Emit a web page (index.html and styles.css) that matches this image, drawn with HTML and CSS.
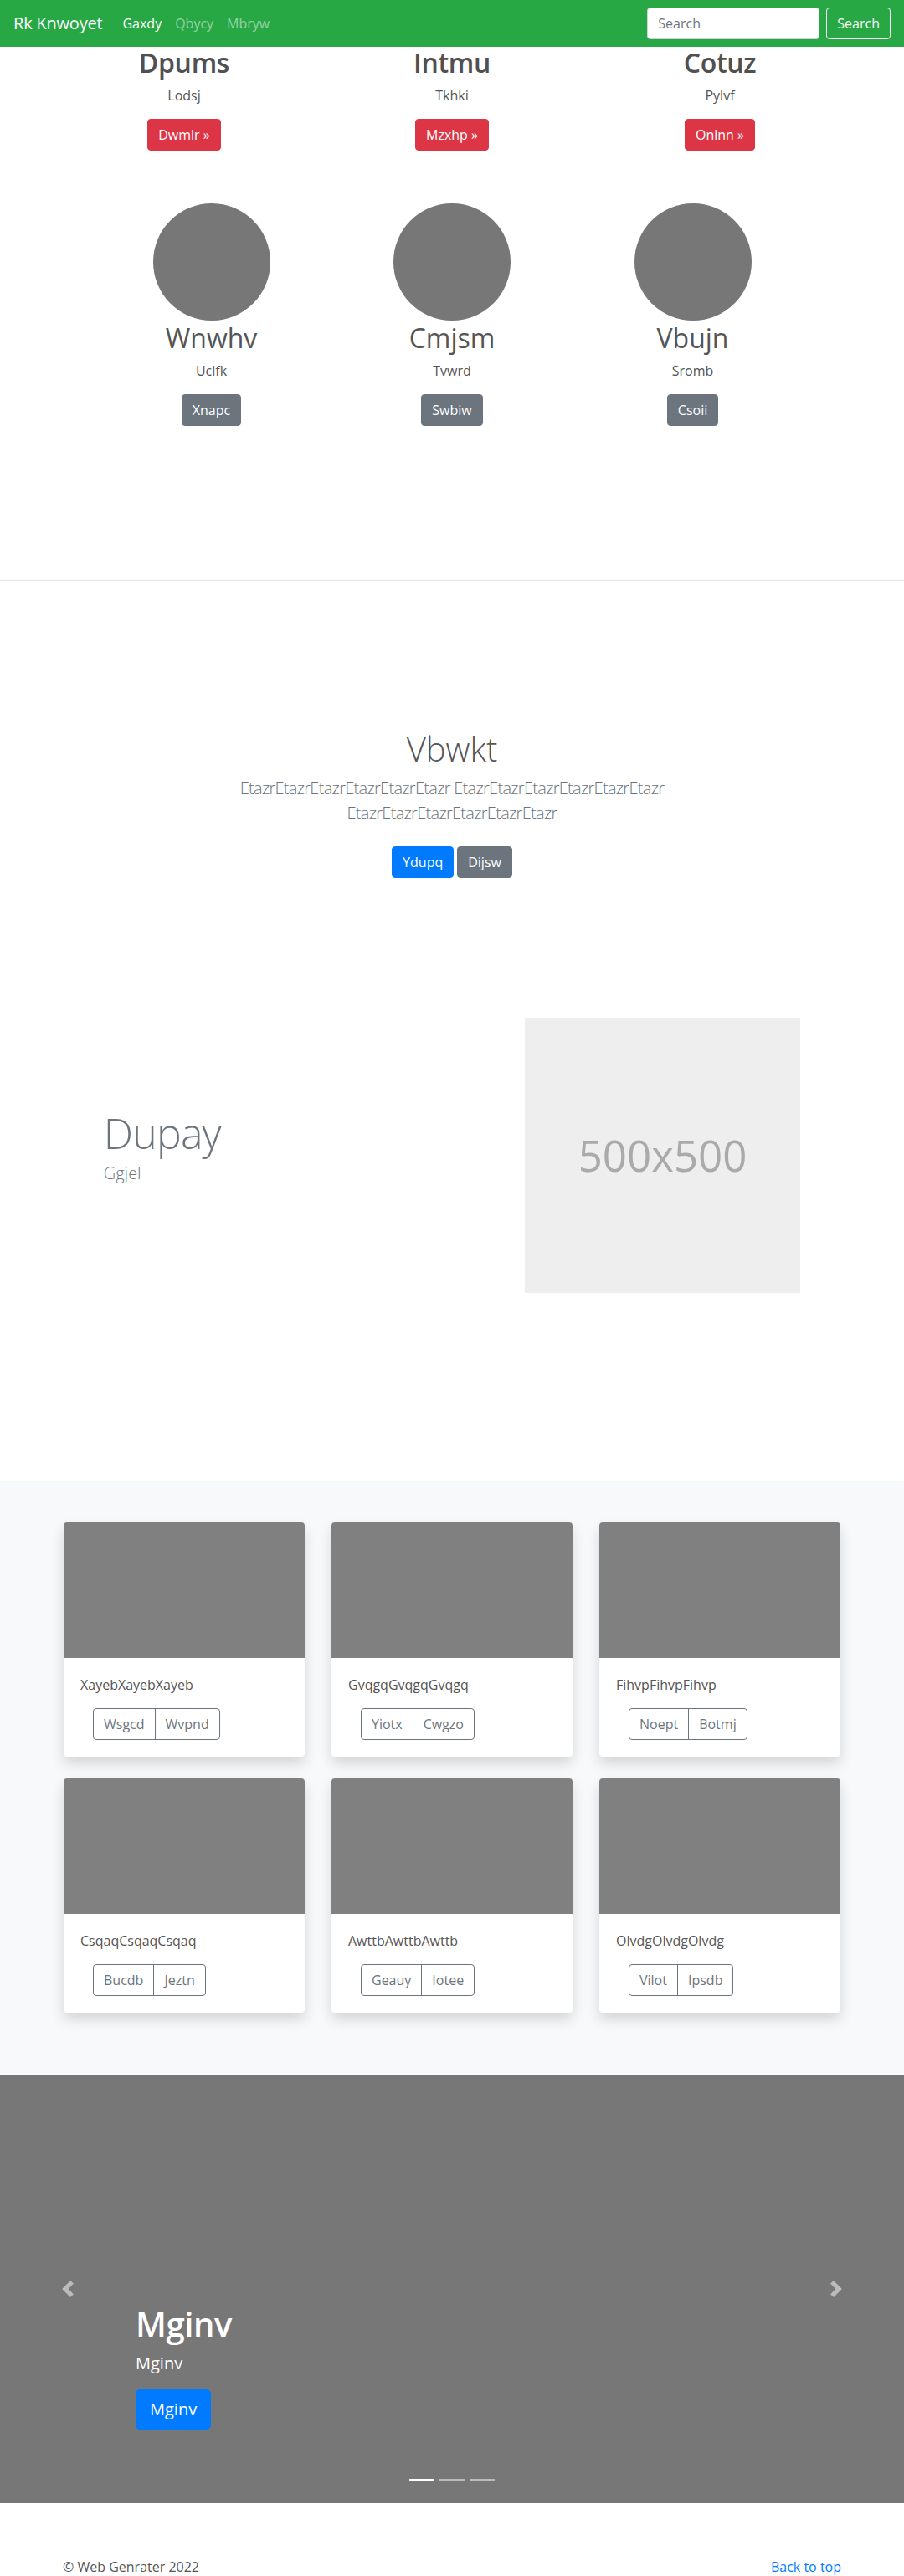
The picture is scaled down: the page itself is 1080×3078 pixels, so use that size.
FILE: index.html
```html
<!DOCTYPE html>
<html lang="en">
<head>
<meta charset="utf-8">
<title>Rk Knwoyet</title>
<link rel="stylesheet" href="styles.css">
</head>
<body>
<nav class="navbar">
  <a class="brand" href="#">Rk Knwoyet</a>
  <ul class="nav-links">
    <li><a class="nav-link active" href="#">Gaxdy</a></li>
    <li><a class="nav-link" href="#">Qbycy</a></li>
    <li><a class="nav-link" href="#">Mbryw</a></li>
  </ul>
  <form class="search">
    <input class="search-input" type="text" placeholder="Search">
    <button class="btn btn-outline-light" type="button">Search</button>
  </form>
</nav>

<section class="container three top-row">
  <div class="col">
    <h2>Dpums</h2>
    <p>Lodsj</p>
    <p class="btn-p"><a class="btn btn-danger" href="#">Dwmlr &raquo;</a></p>
  </div>
  <div class="col">
    <h2>Intmu</h2>
    <p>Tkhki</p>
    <p class="btn-p"><a class="btn btn-danger" href="#">Mzxhp &raquo;</a></p>
  </div>
  <div class="col">
    <h2>Cotuz</h2>
    <p>Pylvf</p>
    <p class="btn-p"><a class="btn btn-danger" href="#">Onlnn &raquo;</a></p>
  </div>
</section>

<section class="marketing">
  <div class="narrow three">
    <div class="col">
      <div class="avatar"></div>
      <h2>Wnwhv</h2>
      <p>Uclfk</p>
      <p class="btn-p"><a class="btn btn-secondary" href="#">Xnapc</a></p>
    </div>
    <div class="col">
      <div class="avatar"></div>
      <h2>Cmjsm</h2>
      <p>Tvwrd</p>
      <p class="btn-p"><a class="btn btn-secondary" href="#">Swbiw</a></p>
    </div>
    <div class="col">
      <div class="avatar"></div>
      <h2>Vbujn</h2>
      <p>Sromb</p>
      <p class="btn-p"><a class="btn btn-secondary" href="#">Csoii</a></p>
    </div>
  </div>
</section>

<hr class="divider">

<section class="jumbotron">
  <h1>Vbwkt</h1>
  <p class="lead">EtazrEtazrEtazrEtazrEtazrEtazr EtazrEtazrEtazrEtazrEtazrEtazr EtazrEtazrEtazrEtazrEtazrEtazr</p>
  <div class="actions">
    <a class="btn btn-primary" href="#">Ydupq</a>
    <a class="btn btn-secondary" href="#">Dijsw</a>
  </div>
</section>

<section class="narrow featurette">
  <div class="feat-text">
    <h2 class="feat-heading">Dupay</h2>
    <p class="lead">Ggjel</p>
  </div>
  <div class="feat-media">
    <div class="placeholder">500x500</div>
  </div>
</section>

<hr class="divider divider-bottom">

<section class="album">
  <div class="cards">
    <div class="card">
      <div class="card-img"></div>
      <div class="card-body">
        <p class="card-text">XayebXayebXayeb</p>
        <div class="btn-group"><a class="btn btn-outline-secondary" href="#">Wsgcd</a><a class="btn btn-outline-secondary" href="#">Wvpnd</a></div>
      </div>
    </div>
    <div class="card">
      <div class="card-img"></div>
      <div class="card-body">
        <p class="card-text">GvqgqGvqgqGvqgq</p>
        <div class="btn-group"><a class="btn btn-outline-secondary" href="#">Yiotx</a><a class="btn btn-outline-secondary" href="#">Cwgzo</a></div>
      </div>
    </div>
    <div class="card">
      <div class="card-img"></div>
      <div class="card-body">
        <p class="card-text">FihvpFihvpFihvp</p>
        <div class="btn-group"><a class="btn btn-outline-secondary" href="#">Noept</a><a class="btn btn-outline-secondary" href="#">Botmj</a></div>
      </div>
    </div>
    <div class="card">
      <div class="card-img"></div>
      <div class="card-body">
        <p class="card-text">CsqaqCsqaqCsqaq</p>
        <div class="btn-group"><a class="btn btn-outline-secondary" href="#">Bucdb</a><a class="btn btn-outline-secondary" href="#">Jeztn</a></div>
      </div>
    </div>
    <div class="card">
      <div class="card-img"></div>
      <div class="card-body">
        <p class="card-text">AwttbAwttbAwttb</p>
        <div class="btn-group"><a class="btn btn-outline-secondary" href="#">Geauy</a><a class="btn btn-outline-secondary" href="#">Iotee</a></div>
      </div>
    </div>
    <div class="card">
      <div class="card-img"></div>
      <div class="card-body">
        <p class="card-text">OlvdgOlvdgOlvdg</p>
        <div class="btn-group"><a class="btn btn-outline-secondary" href="#">Vilot</a><a class="btn btn-outline-secondary" href="#">Ipsdb</a></div>
      </div>
    </div>
  </div>
</section>

<section class="carousel">
  <a class="ctrl ctrl-prev" href="#" aria-label="Previous">
    <svg viewBox="0 0 8 8" fill="#fff"><path d="M5.25 0l-4 4 4 4 1.5-1.5L4.25 4l2.5-2.5L5.25 0z"/></svg>
  </a>
  <a class="ctrl ctrl-next" href="#" aria-label="Next">
    <svg viewBox="0 0 8 8" fill="#fff"><path d="M2.75 0l-1.5 1.5L3.75 4l-2.5 2.5L2.75 8l4-4-4-4z"/></svg>
  </a>
  <div class="caption">
    <h1>Mginv</h1>
    <p>Mginv</p>
    <p><a class="btn btn-primary btn-lg" href="#">Mginv</a></p>
  </div>
  <ol class="indicators">
    <li class="active"></li>
    <li></li>
    <li></li>
  </ol>
</section>

<footer class="footer">
  <div class="container footer-row">
    <p>&copy; Web Genrater 2022</p>
    <p><a href="#">Back to top</a></p>
  </div>
</footer>
</body>
</html>
```

FILE: styles.css
```css
* { box-sizing: border-box; }
html, body { margin: 0; padding: 0; }
body {
  font-family: "Open Sans", "Noto Sans", "Liberation Sans", sans-serif;
  font-size: 16px;
  line-height: 1.5;
  color: #555;
  background: #fff;
}
a { text-decoration: none; }
h1, h2, p { margin: 0; }

/* navbar */
.navbar {
  height: 56px;
  background: #28a745;
  display: flex;
  align-items: center;
  padding: 0 16px;
}
.brand { font-size: 20px; line-height: 30px; color: #fff; margin-right: 16px; letter-spacing: -0.2px; }
.nav-links { list-style: none; margin: 0; padding: 0; display: flex; flex: 1; }
.nav-link { display: block; padding: 8px; color: rgba(255,255,255,.5); }
.nav-link.active { color: #fff; }
.search { display: flex; align-items: center; margin: 0; }
.search-input {
  width: 206px; height: 38px;
  padding: 6px 12px;
  font: inherit; font-size: 16px;
  color: #495057;
  border: 1px solid #ced4da;
  border-radius: 4px;
  margin-right: 8px;
  background: #fff;
}
.search-input::placeholder { color: #6c757d; }

/* buttons */
.btn {
  display: inline-block;
  font-family: inherit;
  font-size: 16px;
  line-height: 24px;
  padding: 6px 12px;
  border: 1px solid transparent;
  border-radius: 4px;
  text-align: center;
  background: transparent;
  cursor: pointer;
}
.btn-outline-light { color: #f8f9fa; border-color: #f8f9fa; }
.btn-danger { background: #dc3545; border-color: #dc3545; color: #fff; }
.btn-secondary { background: #6c757d; border-color: #6c757d; color: #fff; }
.btn-primary { background: #007bff; border-color: #007bff; color: #fff; }
.btn-outline-secondary { color: #6c757d; border-color: #6c757d; }
.btn-lg { font-size: 20px; line-height: 30px; padding: 8px 16px; border-radius: 5px; }

/* containers */
.container { width: 960px; margin: 0 auto; }
.narrow { width: 862.5px; margin: 0 auto; }
.three { display: grid; grid-template-columns: repeat(3, 1fr); }
.col { text-align: center; padding: 0 15px; }
.col p { margin-bottom: 16px; }
.col p.btn-p { margin-bottom: 0; }

/* top row */
.top-row h2 { font-size: 32px; line-height: 38.4px; font-weight: 600; margin-bottom: 8px; color: #505050; letter-spacing: -0.3px; }

/* marketing */
.marketing { padding-top: 62.6px; padding-bottom: 183.6px; }
.avatar { width: 140px; height: 140px; border-radius: 50%; background: #777; margin: 0 auto; }
.marketing h2 { font-size: 32px; line-height: 38.4px; font-weight: 400; margin: 2px 0 8px; }

.divider { border: 0; border-top: 1px solid rgba(0,0,0,.1); margin: 0; }
.divider-bottom { margin-bottom: 80px; }

/* jumbotron */
.jumbotron { padding-top: 176.5px; padding-bottom: 167.5px; text-align: center; }
.jumbotron h1 { font-size: 40px; line-height: 48px; font-weight: 300; margin-bottom: 8px; color: #555; }
.lead { font-size: 20px; line-height: 30px; font-weight: 300; }
.jumbotron .lead { color: #6c757d; max-width: 640px; margin: 0 auto 24px; letter-spacing: -0.7px; }
.actions { display: flex; justify-content: center; gap: 4px; }

/* featurette */
.featurette { display: flex; align-items: center; margin-bottom: 143.6px; }
.feat-text { flex: 0 0 58.3333%; padding: 0 15px; }
.feat-media { flex: 0 0 41.6667%; padding: 0 15px; }
.feat-heading { font-size: 50px; line-height: 1; font-weight: 300; letter-spacing: -0.8px; color: #6c757d; margin-bottom: 8px; }
.feat-text .lead { color: #6c757d; margin-bottom: 16px; }
.placeholder {
  aspect-ratio: 1 / 1;
  background: #eee;
  color: #aaa;
  font-size: 51px;
  display: flex;
  align-items: center;
  justify-content: center;
}

/* album */
.album { background: #f8f9fa; padding: 48.7px 0 74px; }
.cards {
  width: 928px;
  margin: 0 auto;
  display: grid;
  grid-template-columns: repeat(3, 288px);
  column-gap: 32px;
  row-gap: 26px;
}
.card { background: #fff; border-radius: 4px; box-shadow: 0 8px 16px rgba(0,0,0,.15); overflow: hidden; }
.card-img { height: 162px; background: #808080; }
.card-body { padding: 20px; }
.card-text { margin-bottom: 16px; }
.btn-group { display: inline-flex; margin-left: 15px; }
.btn-group .btn:first-child { border-radius: 4px 0 0 4px; }
.btn-group .btn + .btn { margin-left: -1px; border-radius: 0 4px 4px 0; }

/* carousel */
.carousel { position: relative; height: 512px; background: #777; overflow: hidden; }
.ctrl {
  position: absolute; top: 0; bottom: 0; width: 15%;
  display: flex; align-items: center; justify-content: center;
  opacity: .5;
}
.ctrl-prev { left: 0; }
.ctrl-next { right: 0; }
.ctrl svg { width: 20px; height: 20px; display: block; }
.caption {
  position: absolute; left: 15%; right: 15%; bottom: 52px;
  padding: 20px 0; color: #fff; text-align: left;
}
.caption h1 { font-size: 40px; line-height: 48px; font-weight: 600; margin-bottom: 8px; letter-spacing: -0.4px; }
.caption p { font-size: 20px; line-height: 30px; margin-bottom: 16px; }
.indicators {
  position: absolute; left: 15%; right: 15%; bottom: 16px;
  display: flex; justify-content: center;
  list-style: none; margin: 0; padding: 0;
}
.indicators li { width: 30px; height: 3px; margin: 0 3px 10px; background: #fff; opacity: .5; }
.indicators li.active { opacity: 1; }

/* footer */
.footer { padding-top: 64px; }
.footer-row { display: flex; justify-content: space-between; padding: 0 15px; }
.footer a { color: #007bff; }
```
